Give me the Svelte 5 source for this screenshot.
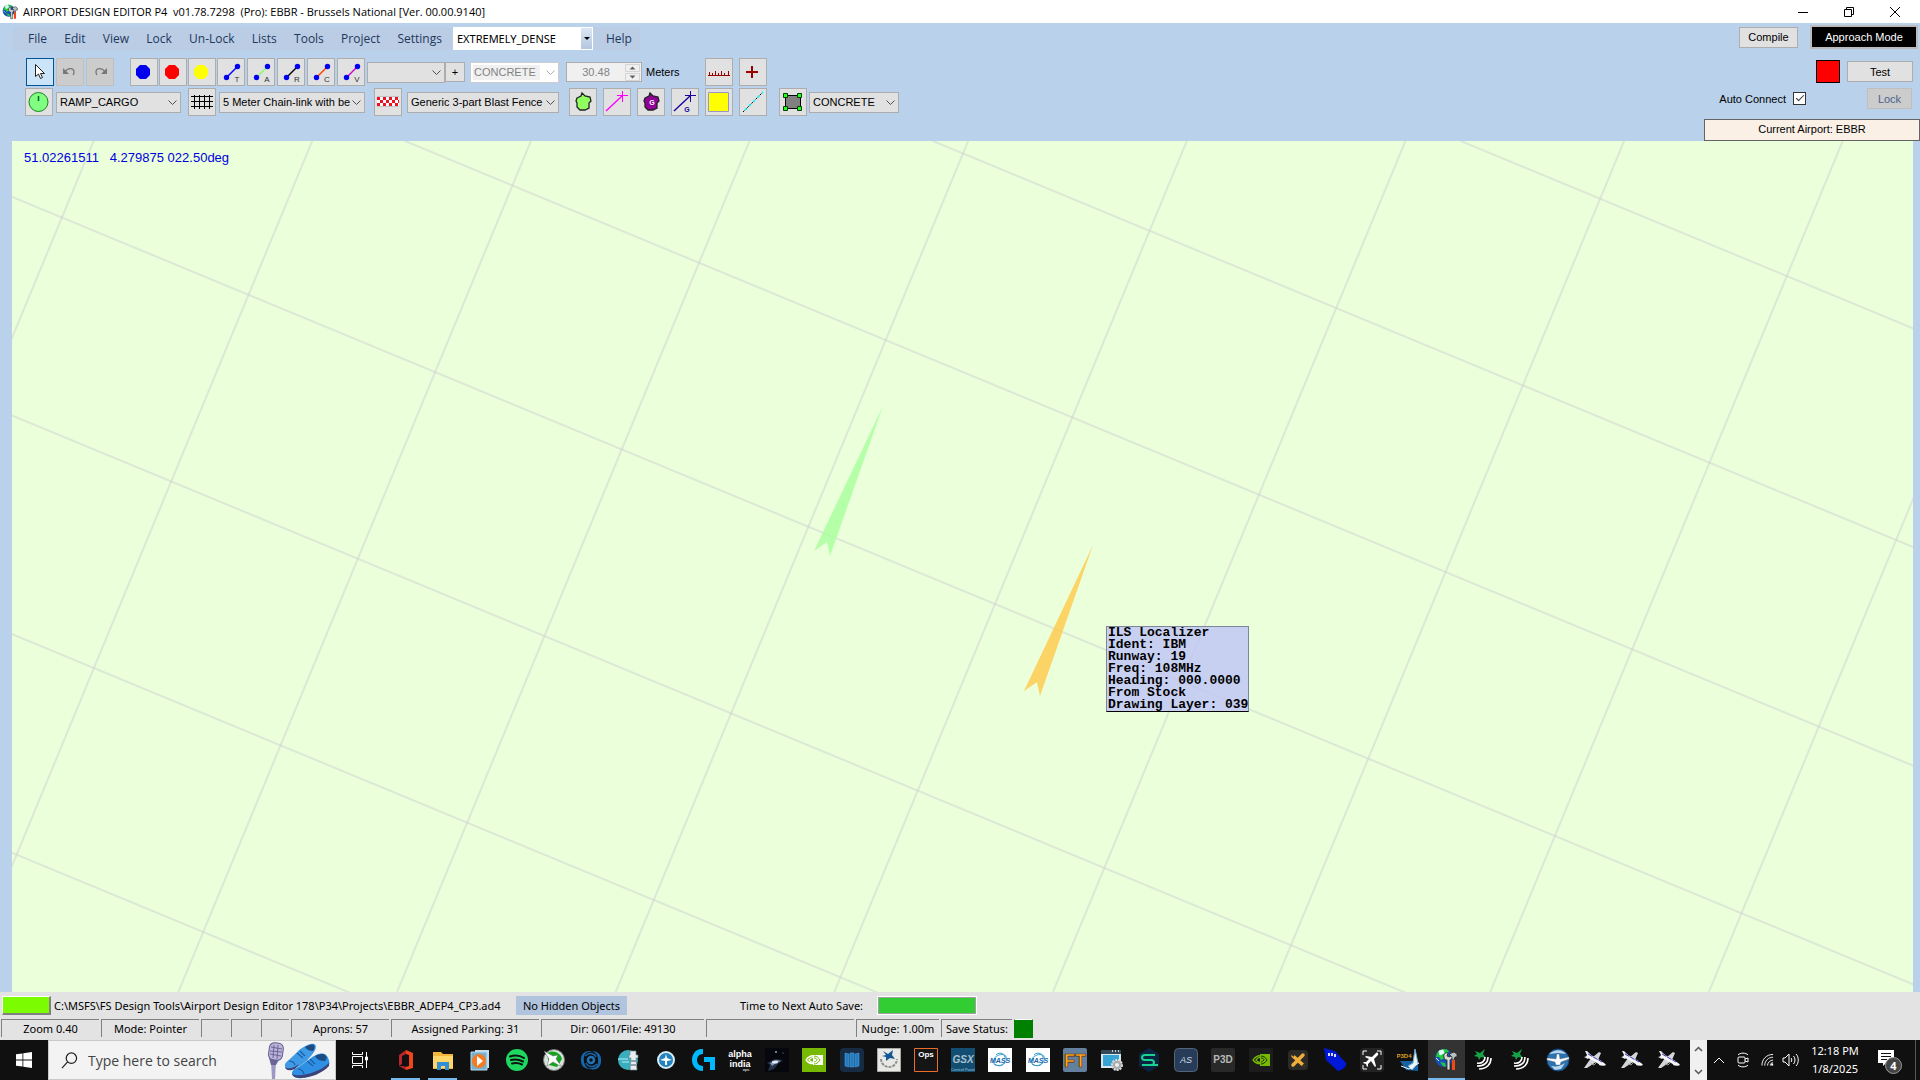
<script>
	const menus = ['File', 'Edit', 'View', 'Lock', 'Un-Lock', 'Lists', 'Tools', 'Project', 'Settings'];

	const vertices = [
		{ name: 'Blue vertex', color: '#0000f0' },
		{ name: 'Red vertex', color: '#ff0000' },
		{ name: 'Yellow vertex', color: '#ffff00' }
	];

	const links = [
		{ letter: 'T', color: '#0000ff' },
		{ letter: 'A', color: '#80ff60' },
		{ letter: 'R', color: '#000000' },
		{ letter: 'C', color: '#ff4000' },
		{ letter: 'V', color: '#d000d0' }
	];

	const tooltip = [
		'ILS Localizer',
		'Ident: IBM',
		'Runway: 19',
		'Freq: 108MHz',
		'Heading: 000.0000',
		'From Stock',
		'Drawing Layer: 039'
	];

	const apps = [
		'office', 'explorer', 'player', 'spotify', 'fsx', 'swirl', 'tower', 'compass', 'logitech',
		'alpha', 'space', 'nvidia', 'books', 'plane', 'ops', 'gsx', 'mass', 'mass', 'ft', 'setup',
		'sim', 'as', 'p3d', 'nvidia2', 'xtool', 'phone', 'flight', 'p3d4', 'ade', 'radar', 'radar',
		'globe', 'jet', 'jet', 'jet'
	];
	const running = ['office', 'explorer', 'ade'];

	let density = $state('EXTREMELY_DENSE');
	let autoConnect = $state(true);
	let width = $state('30.48');
</script>

{#snippet chevron()}
	<svg class="chevron" viewBox="0 0 9 6" aria-hidden="true"><path d="M.5.5l4 4 4-4" /></svg>
{/snippet}

{#snippet combo(label, value, cls, disabled = false)}
	<span class="combo {cls}" class:disabled>
		<select aria-label={label} {disabled}><option>{value}</option></select>
		{@render chevron()}
	</span>
{/snippet}

{#snippet adeIcon()}
	<circle cx="10" cy="10" r="9" fill="#1650b8" />
	<path d="M3 5c3-5 9-5 12-2l-3 3-1 4-4 2-2-3-3 0zM6 14l5 1 1 4-3-1z" fill="#24c83c" />
	<path d="M5 3l4-1 1 3-4 2zM2 10l3 3" stroke="#d8f4ff" fill="#e8ffff" />
	<path d="M10 9c-1-3 2-5 4-4l-1 3 3 1 2-3c2 3 0 5-2 6v10h-3V12c-2 0-3-1-3-3z" fill="#d8d8d8" stroke="#222" stroke-width=".8" />
	<path d="M15 6l5-2 3 2v3h-2l-1 3h-2V9z" fill="#b8c0c0" stroke="#222" stroke-width=".8" />
	<path d="M18 12h3v10h-3z" fill="#f04818" />
{/snippet}

{#snippet polyPath(fill)}
	<path d="M8 10l4-2 1-3 3 3 5 1 1 4-2 2v5l-4 2h-5l-3-3v-4l-1-2z" {fill} stroke="#222" stroke-width="1.3" />
{/snippet}

{#snippet appIcon(name)}
	<svg viewBox="0 0 24 24" aria-hidden="true">
		{#if name === 'office'}
			<path d="M12 2L5 7v11l3-2V8l4-2zM5 18l7 4 2-3-6-1z" fill="#b8262c" />
			<path d="M12 2l7 3v15l-7 2v-3l3-1V7l-3-1z" fill="#f0441c" />
		{:else if name === 'explorer'}
			<path d="M2 4h8l2 2h10v15H2z" fill="#f0b73a" />
			<path d="M2 8h20v12H2z" fill="#ffd768" />
			<path d="M6 22v-8h12v8h-4v-4h-4v4z" fill="#318fd8" />
		{:else if name === 'player'}
			<path d="M7 2h14v18H7z" fill="#c7dce9" />
			<path d="M3 4h16v18H3z" fill="#75afd1" stroke="#b8dceb" />
			<circle cx="11" cy="13" r="7" fill="#f47b20" />
			<path d="M9 8l6 5-6 5z" fill="#fff" />
		{:else if name === 'spotify'}
			<circle cx="12" cy="12" r="11" fill="#1ed760" />
			<path d="M5 8.500c5-1.500 10-1 14 1.500M6 12c4-1 8-.6 12 1.500M7 15.500c4-1 7-.5 10 1" fill="none" stroke="#111" stroke-width="2" stroke-linecap="round" />
		{:else if name === 'fsx'}
			<circle cx="12" cy="12" r="10.500" fill="#d8e3da" stroke="#777" />
			<path d="M5 5c6-4 14 0 15 6l-5 8-8-2z" fill="#12a51e" />
			<path d="M2 3l9 5 5-1-2 4 6 8-9-5-6 4 2-7z" fill="#fff" stroke="#666" stroke-width=".5" />
		{:else if name === 'swirl'}
			<circle cx="12" cy="12" r="3" fill="none" stroke="#2272b8" stroke-width="2.500" />
			<path d="M2 13C1 5 8 1 14 4c-6-1-10 2-9 9 0 4 3 7 6 8-5 0-9-3-9-8zM22 11c1 9-6 13-13 9 7 1 11-2 10-9 0-4-3-7-6-8 5 0 9 3 9 8z" fill="#1766ac" />
			<path d="M6 8c4-4 9-3 11 1M18 16c-4 4-9 3-11-1" fill="none" stroke="#1766ac" stroke-width="1.500" />
		{:else if name === 'tower'}
			<circle cx="11" cy="12" r="10" fill="#39aebe" />
			<path d="M1 11h10M5 14h7" stroke="#b9edf4" />
			<path d="M13 3h6v4h2v3h-2l1 12h-7l1-12h-2V7h1z" fill="#e7eef0" stroke="#74848a" stroke-width=".7" />
			<path d="M14 13h5M14 17h6" stroke="#91a3aa" stroke-width="2" />
		{:else if name === 'compass'}
			<circle cx="12" cy="12" r="8" fill="#2182bd" stroke="#d8edf4" stroke-width="2" />
			<path d="M12 6l1 4 5 2-5 1v4h-2v-4l-5-1 5-2z" fill="#fff" />
		{:else if name === 'logitech'}
			<path d="M12 1C5 0 1 6 1 12s4 11 11 11v-5c-4 0-6-3-6-6s2-6 6-6zM13 9h11v13h-5v-8h-6z" fill="#00b8fc" />
		{:else if name === 'alpha'}
			<text x="12" y="9" class="alpha">alpha</text>
			<text x="12" y="19" class="alpha">india</text>
			<text x="18" y="23" class="tiny">ops</text>
		{:else if name === 'space'}
			<path d="M0 0h24v24H0z" fill="#05070c" />
			<path d="M2 15l8-4 8 1-5 4-4 5-6 2 2-6z" fill="#26324a" />
			<path d="M5 15l7-3 4 1-5 2-4 3z" fill="#8794b0" />
			<ellipse cx="10" cy="14" rx="3" ry="1.500" fill="#dfe9fa" />
			<circle cx="11" cy="4" r="1" fill="#90a8bf" />
			<circle cx="18" cy="5" r=".7" fill="#606880" />
		{:else if name === 'nvidia'}
			<path d="M0 0h24v24H0z" fill="#76b900" />
			<path d="M11 7h10v10H11z" fill="#fff" />
			<path d="M4 12c4-6 10-5 14-1-4 6-10 6-14 1zm3 0c3-4 6-3 8 0-2 3-6 3-8 0z" fill="none" stroke="#fff" stroke-width="1.300" />
			<path d="M12 8c3 0 5 2 6 4-2 3-4 4-6 4M12 10c2 0 3 1 3 2-1 1-2 2-3 2" fill="none" stroke="#76b900" />
		{:else if name === 'books'}
			<rect width="24" height="24" rx="4" fill="#172b43" />
			<path d="M5 5l4 1v13l-4-1zM10 5h4v14h-4zM15 6l4-1v13l-4 1z" fill="#247bc0" stroke="#489ed8" stroke-width=".6" />
		{:else if name === 'plane'}
			<path d="M.5.500h23v23H.500z" fill="#e8e8e4" stroke="#a8a8a8" />
			<path d="M4 11a8 8 0 1 0 16 0" fill="none" stroke="#8f8f8f" stroke-width="2" stroke-dasharray="3 1" />
			<path d="M6 3l5 3 5-4-1 5 3 4-5-1-4 3V9L5 8l4-1z" fill="#125694" />
		{:else if name === 'ops'}
			<path d="M.5.500h23v23H.500z" fill="#151515" stroke="#ee6c2b" />
			<text x="12" y="9" class="ops">Ops</text>
		{:else if name === 'gsx'}
			<path d="M0 0h24v24H0z" fill="#124d72" />
			<text x="12" y="15" class="gsx">GSX</text>
			<text x="12" y="23" class="tiny panel">Control Panel</text>
		{:else if name === 'mass'}
			<path d="M0 0h24v24H0z" fill="#fff" />
			<ellipse cx="12" cy="12" rx="7" ry="5" fill="none" stroke="#47afe2" transform="rotate(-30 12 12)" />
			<path d="M8 7c4-4 10-1 9 4M6 16c5 3 9 2 11-2" fill="none" stroke="#2f92ca" />
			<text x="12" y="15" class="mass">MASS</text>
		{:else if name === 'ft'}
			<rect width="24" height="24" rx="2" fill="#63809e" />
			<text x="12" y="19" class="ft">FT</text>
		{:else if name === 'setup'}
			<path d="M1 2h20v18H1z" fill="#d9e8f0" />
			<path d="M1 2h20v4H1z" fill="#354858" />
			<path d="M3 7h16v11H3z" fill="#36a5d4" />
			<path d="M12 3h1M15 3h1M18 3h1" stroke="#fff" stroke-width="1.500" />
			<circle cx="17" cy="17" r="5" fill="#aaa" stroke="#ddd" stroke-width="2" stroke-dasharray="2 1" />
			<circle cx="17" cy="17" r="2" fill="#eee" />
		{:else if name === 'sim'}
			<path d="M12 0l10 6v12l-10 6-10-6V6z" fill="#0b2540" />
			<path d="M18 7H8c-4 0-4 5 0 5h6c4 0 4 5 0 5H5M15 17h6" fill="none" stroke="#1ad391" stroke-width="2" />
		{:else if name === 'as'}
			<rect x=".5" y=".5" width="23" height="23" rx="4" fill="#263c58" stroke="#536579" />
			<text x="12" y="15" class="as">AS</text>
		{:else if name === 'p3d'}
			<rect width="24" height="24" rx="2" fill="#292929" />
			<text x="12" y="15" class="p3d">P3D</text>
		{:else if name === 'nvidia2'}
			<path d="M0 0h24v24H0z" fill="#1c1c1c" />
			<path d="M11 6h10v12H11z" fill="#76b900" />
			<path d="M4 12c4-6 10-5 14-1-4 6-10 6-14 1zm3 0c3-4 6-3 8 0-2 3-6 3-8 0z" fill="none" stroke="#76b900" stroke-width="1.300" />
			<path d="M12 8c3 0 5 2 6 4-2 3-4 4-6 4M12 10c2 0 3 1 3 2-1 1-2 2-3 2" fill="none" stroke="#20300a" />
		{:else if name === 'xtool'}
			<rect x="2" y="2" width="20" height="20" rx="4" fill="#2c2a27" />
			<path d="M7 8l10 9M17 7L7 17" stroke="#efad3a" stroke-width="3.500" stroke-linecap="round" />
			<path d="M5 5l3 3M19 16l-3 3" stroke="#2c2a27" stroke-width="2" />
		{:else if name === 'phone'}
			<path d="M1 0l11 3 11 12c1 4-4 7-8 8L3 12z" fill="#0018d8" />
			<path d="M5 5h2v3H5zM8 5h2v3H8zM11 6h2v3h-2z" fill="#d4ddff" />
		{:else if name === 'flight'}
			<rect width="24" height="24" rx="4" fill="#242424" />
			<path d="M3 7V3h4M17 3h4v4M21 17v4h-4M7 21H3v-4" fill="none" stroke="#fff" />
			<path d="M6 8l6 1 4-4c1-1 3 0 2 2l-4 4 2 7-1 1-4-6-3 3v2l-1 1-1-3-3-1 1-1h2l3-3-4-2z" fill="#fff" />
		{:else if name === 'p3d4'}
			<path d="M3 13h18v10l-12-1z" fill="#1762a0" />
			<path d="M18 1l3 14-6 7-4-4 5-3z" fill="#e8f3f8" stroke="#6fa6c8" />
			<path d="M4 18l8 3 10-6" fill="none" stroke="#fff" />
			<text x="7" y="10" class="p3d4">P3D4</text>
		{:else if name === 'ade'}
			{@render adeIcon()}
		{:else if name === 'radar'}
			<path d="M3 3l5 2 5-4-2 5 3 4-5-1-2 3-1-3-4-1 3-2z" fill="#16a348" />
			<path d="M5 15c5 1 8-2 8-6M5 18c8 0 11-4 11-9M7 21c8 0 12-5 12-11" fill="none" stroke="#fff" stroke-width="1.600" />
		{:else if name === 'globe'}
			<circle cx="12" cy="12" r="11" fill="#2c72ae" stroke="#164375" />
			<path d="M3 6c6-5 13-5 17 0l-8-1zM5 18c6 1 9 0 14-3l-4 6-6 1z" fill="#b9d7ed" />
			<path d="M1 10l9 1 1-5h2l1 5 9-2v2l-8 3-1 3h-4l-1-3-8-2z" fill="#fff" stroke="#5a6e80" stroke-width=".4" />
		{:else if name === 'jet'}
			<path d="M10 9l6-5 2 1-3 7zM8 10L1 20h3l9-6z" fill="#d4d5d9" />
			<path d="M2 3h2l4 4-3 2zM1 9l4-1 2 1-2 2z" fill="#e6e6ea" />
			<path d="M4 7l14 8" stroke="#f6f6f8" stroke-width="4" />
			<path d="M17 13c3 1 5 2 6 4-1 1-5 1-7 0z" fill="#f6f6f8" />
			<path d="M5 6l14 8" stroke="#3036b8" stroke-dasharray="5 1" />
			<path d="M8 16l3 1 2-2" fill="none" stroke="#999" />
		{/if}
	</svg>
{/snippet}

<div class="desktop">
	<div class="titlebar">
		<svg class="app-icon" viewBox="0 0 24 24" aria-hidden="true">{@render adeIcon()}</svg>
		<h1>AIRPORT DESIGN EDITOR P4&nbsp; v01.78.7298&nbsp; (Pro): EBBR - Brussels National [Ver. 00.00.9140]</h1>
		<div class="window-buttons">
			<button aria-label="Minimize"><svg viewBox="0 0 12 12"><path d="M1 6.500h10" /></svg></button>
			<button aria-label="Restore"><svg viewBox="0 0 12 12"><path d="M1.500 3.500h7v7h-7zM3.500 3.500v-2h7v7h-2" /></svg></button>
			<button aria-label="Close"><svg viewBox="0 0 12 12"><path d="M1 1l10 10M11 1L1 11" /></svg></button>
		</div>
	</div>

	<header>
		<div class="tools">
			<nav class="menubar">
				<div class="menus">
					{#each menus as menu}
						<button>{menu}</button>
					{/each}
				</div>
				<span class="combo density">
					<select aria-label="Scenery density" bind:value={density}>
						<option>EXTREMELY_DENSE</option>
						<option>DENSE</option>
						<option>NORMAL</option>
					</select>
					<span class="drop"></span>
				</span>
				<button>Help</button>
			</nav>

			<div class="row first">
				<div class="group wide">
					<button class="tool active" aria-label="Pointer">
						<svg viewBox="1 1 26 26"><path d="M9.500 6.500v12l3-2.500 2 4.500 2-1-2-4h4z" fill="#fff" stroke="#222" /></svg>
					</button>
					<button class="tool off" aria-label="Undo" disabled>
						<svg viewBox="1 1 26 26"><path d="M7 10v6h6z" fill="#777" /><path d="M9 14c3-5 9-4 9 0 0 1 0 2-1 3" fill="none" stroke="#777" stroke-width="1.300" /></svg>
					</button>
					<button class="tool off" aria-label="Redo" disabled>
						<svg viewBox="1 1 26 26"><path d="M21 10v6h-6z" fill="#777" /><path d="M19 14c-3-5-9-4-9 0 0 1 0 2 1 3" fill="none" stroke="#777" stroke-width="1.300" /></svg>
					</button>
				</div>
				<div class="group vertices">
					{#each vertices as v}
						<button class="tool" aria-label={v.name}>
							<svg viewBox="1 1 26 26"><path d="M10 7h6l4 4v6l-4 4h-6l-4-4v-6z" fill={v.color} /></svg>
						</button>
					{/each}
				</div>
				<div class="group links">
					{#each links as l}
						<button class="tool" aria-label="Link {l.letter}">
							<svg viewBox="1 1 26 26">
								<path d="M9.500 19.500l11-11" stroke={l.color} stroke-width="1.400" />
								<circle cx="9.500" cy="19.500" r="2.700" fill="#0000f0" />
								<circle cx="20.500" cy="8.500" r="2.700" fill="#0000f0" />
								<text x="20" y="24" class="link-letter">{l.letter}</text>
							</svg>
						</button>
					{/each}
				</div>
				{@render combo('Link name', '', 'w-name')}
				<button class="add" aria-label="Add name">+</button>
				{@render combo('Link surface', 'CONCRETE', 'w-surface', true)}
				<span class="spinner">
					<input aria-label="Width in meters" bind:value={width} disabled />
					<svg viewBox="0 0 15 17" aria-hidden="true">
						<path d="M.5.500h14v7H.500zM.5 9.500h14v7H.500z" fill="#f0f0f0" stroke="#d4d4d4" />
						<path d="M4.500 5.500l3-3 3 3zM4.500 11.500l3 3 3-3z" fill="#606060" />
					</svg>
				</span>
				<span class="unit">Meters</span>
				<div class="group measure">
					<button class="tool" aria-label="Measure">
						<svg viewBox="1 1 26 26"><path d="M3 17.500h22M4.500 17v-3M7.500 17v-2M10.500 17v-4M13.500 17v-2M16.500 17v-4M19.500 17v-2M23.500 17v-4" stroke="#900" fill="none" /></svg>
					</button>
					<button class="tool" aria-label="Add point">
						<svg viewBox="1 1 26 26"><path d="M7 14h12M13 8v12" stroke="#900" stroke-width="2" /></svg>
					</button>
				</div>
			</div>

			<div class="row second">
				<button class="tool" aria-label="Parking">
					<svg viewBox="1 1 26 26">
						<circle cx="13.500" cy="14" r="9.500" fill="#80ff80" stroke="#208020" />
						<path d="M13.500 8v5" stroke="#063" stroke-width="1.500" />
					</svg>
				</button>
				{@render combo('Parking type', 'RAMP_CARGO', 'w-parking')}
				<button class="tool fence" aria-label="Fence">
					<svg viewBox="1 1 26 26"><path d="M3 8.500h22M3 13.500h22M3 18.500h22M6.500 7v14M11.500 7v14M16.500 7v14M21.500 7v14" stroke="#000" fill="none" /></svg>
				</button>
				{@render combo('Fence type', '5 Meter Chain-link with be', 'w-fence')}
				<button class="tool blast" aria-label="Blast fence">
					<svg viewBox="1 1 26 26">
						<path d="M3 9h22v9H3z" fill="#fff" />
						<path d="M3 8.500h22M3 18.500h22" stroke="#c4c4c4" />
						<path d="M3 10.500h22M3 16.500h22" stroke="#f01020" stroke-width="3" stroke-dasharray="3" />
						<path d="M6 13.500h19" stroke="#f01020" stroke-width="3" stroke-dasharray="3" />
					</svg>
				</button>
				{@render combo('Blast fence type', 'Generic 3-part Blast Fence', 'w-blast')}
				<div class="group shapes">
					<button class="tool" aria-label="Polygon"><svg viewBox="1 1 26 26">{@render polyPath('#90ff60')}</svg></button>
					<button class="tool" aria-label="Line">
						<svg viewBox="1 1 26 26"><path d="M3 23L19 8" stroke="#f0f" stroke-width="1.400" /><path d="M14 7.500h11M19.500 3v11" stroke="#f0f" /></svg>
					</button>
					<button class="tool" aria-label="Ground polygon">
						<svg viewBox="1 1 26 26">{@render polyPath('#900098')}<text x="15" y="17" class="g light">G</text></svg>
					</button>
					<button class="tool" aria-label="Ground line">
						<svg viewBox="1 1 26 26"><path d="M3 23L19 8" stroke="#20009c" stroke-width="1.400" /><path d="M14 7.500h11M19.500 3v11" stroke="#20009c" /><text x="16" y="24" class="g">G</text></svg>
					</button>
					<button class="tool" aria-label="Rectangle">
						<svg viewBox="1 1 26 26"><path d="M3.500 4.500h20v19h-20z" fill="#ff0" stroke="#9898c8" /></svg>
					</button>
					<button class="tool" aria-label="Dashed line">
						<svg viewBox="1 1 26 26">
							<path d="M4 24L24 4" stroke="#000" stroke-dasharray="2 1" />
							<path d="M6 22L24 4" stroke="#0ff" stroke-width="2" stroke-dasharray="2 4" />
						</svg>
					</button>
				</div>
				<button class="tool area" aria-label="Apron">
					<svg viewBox="1 1 26 26">
						<path d="M6.500 7.500h15v13h-15z" fill="#808080" stroke="#000" />
						<path d="M4.500 5.500h4v4h-4zM18.500 5.500h4v4h-4zM4.500 18.500h4v4h-4zM18.500 18.500h4v4h-4z" fill="#20ff20" stroke="#004000" />
					</svg>
				</button>
				{@render combo('Apron surface', 'CONCRETE', 'w-apron')}
			</div>
		</div>

		<div class="side">
			<div class="side-row modes">
				<button class="push compile">Compile</button>
				<button class="push approach">Approach Mode</button>
			</div>
			<div class="side-row test">
				<span class="signal"></span>
				<button class="push">Test</button>
			</div>
			<div class="side-row connect">
				<label>Auto Connect <input type="checkbox" bind:checked={autoConnect} /></label>
				<button class="push lock" disabled>Lock</button>
			</div>
			<div class="airport">Current Airport: EBBR</div>
		</div>
	</header>

	<main>
		<svg class="map" role="img" aria-label="Airport map">
			<defs>
				<pattern id="grid" width="202" height="202" patternUnits="userSpaceOnUse" patternTransform="translate(983 463) rotate(22.5) translate(-101 -101)">
					<path d="M101 0v202M0 101h202" stroke="#d0d0d0" stroke-width="1" fill="none" />
				</pattern>
			</defs>
			<rect width="100%" height="100%" fill="url(#grid)" />
			<path d="M871 265l-69 145 13-9 3 14z" fill="#a8ff9c" fill-opacity=".8" />
			<path d="M1081 404l-69 146 13-9 3 14z" fill="#ffcb50" fill-opacity=".85" />
		</svg>
		<span class="coords">51.02261511   4.279875 022.50deg</span>
		<div class="tooltip">
			{#each tooltip as line}
				<div>{line}</div>
			{/each}
		</div>
	</main>

	<footer>
		<div class="file-row">
			<span class="led"></span>
			<span class="path">C:\MSFS\FS Design Tools\Airport Design Editor 178\P34\Projects\EBBR_ADEP4_CP3.ad4</span>
			<span class="hidden-objects">No Hidden Objects</span>
			<span class="autosave">Time to Next Auto Save:</span>
			<span class="autosave-bar"></span>
		</div>
		<div class="status-row">
			<span class="cell w98">Zoom 0.40</span>
			<span class="cell w98">Mode: Pointer</span>
			<span class="cell w28"></span>
			<span class="cell w28"></span>
			<span class="cell w28"></span>
			<span class="cell w98">Aprons: 57</span>
			<span class="cell w148">Assigned Parking: 31</span>
			<span class="cell w163">Dir: 0601/File: 49130</span>
			<span class="cell w148"></span>
			<span class="cell w83">Nudge: 1.00m</span>
			<span class="cell save">Save Status:</span>
			<span class="save-led"></span>
		</div>
	</footer>

	<div class="taskbar">
		<button class="start" aria-label="Start">
			<svg viewBox="0 0 16 16"><path d="M0 2.300l6.500-.9v6.200H0zM7.300 1.300L16 0v7.600H7.300zM0 8.400h6.500v6.200L0 13.700zM7.300 8.400H16V16l-8.700-1.300z" fill="#fff" /></svg>
		</button>
		<label class="search">
			<svg class="lens" viewBox="0 0 18 18" aria-hidden="true"><circle cx="11" cy="6.500" r="5.500" /><path d="M7 10.500L1 17" /></svg>
			<input type="text" aria-label="Search" placeholder="Type here to search" />
			<svg class="art" viewBox="0 0 64 38" aria-hidden="true">
				<path d="M4 20l1 18h3l1-18z" fill="#9d97c4" />
				<path d="M2 17l2 7h5l4-7z" fill="#6b6494" />
				<rect x="2" y="2" width="14" height="17" rx="5" fill="#b9b4da" stroke="#655d90" transform="rotate(8 9 10)" />
				<path d="M4 6l11 2M3 10l12 1M3 13l11 2M7 4L6 17M11 4l-1 14" stroke="#655d90" stroke-width=".9" />
				<path d="M18 25c-1-3 3-5 7-9 4-3 6-7 10-9 5-3 9-5 12-4s2 5 0 8c-5 7-12 15-22 17-4 1-7 0-7-3z" fill="#3f9be6" />
				<path d="M38 6c3-2 7-3 9-2 1 1 1 4-1 6-3 0-6-1-8-4z" fill="#1b4c84" />
				<path d="M25 32c0-4 6-5 11-9 5-3 8-7 13-9 4-2 8-2 10 0 3 3 4 8 3 10-5 7-18 12-27 13-6 1-10-2-10-5z" fill="#2f8fe2" />
				<path d="M48 15c4-2 8-3 10-1 2 1 2 4 0 6-4 0-8-1-10-5z" fill="#1b4c84" />
				<path d="M25 33c8 4 28-2 37-11v3c-6 7-19 12-28 12-5 0-8-1-9-4zM18 26c4 3 10 0 14-3l-4 5c-5 2-9 2-10-2z" fill="#3d4378" />
				<path d="M30 12l6 5M33 10l5 5M40 20l6 5M43 18l5 5M22 20c3 0 5 1 6 4M31 28c3 0 5 2 6 5" fill="none" stroke="#1a5ca8" stroke-width="1.200" />
			</svg>
		</label>
		<button class="task-view" aria-label="Task View">
			<svg viewBox="0 0 18 18"><path d="M1.500 1v2.500h10V1M1.500 17v-2.500h10V17M1.500 5.500h10v7h-10zM15.500 1v16" /><path d="M14.500 6h2v3h-2z" fill="#fff" /></svg>
		</button>
		<div class="apps">
			{#each apps as app}
				<button class="app" class:running={running.includes(app)} class:current={app === 'ade'} aria-label={app}>
					{@render appIcon(app)}
				</button>
			{/each}
		</div>
		<div class="scroll">
			<svg viewBox="0 0 9 6"><path d="M1 5l3.500-3.500L8 5" /></svg>
			<svg viewBox="0 0 9 6"><path d="M1 1l3.500 3.500L8 1" /></svg>
		</div>
		<div class="tray">
			<svg class="up" viewBox="0 0 12 8"><path d="M1 7l5-5 5 5" /></svg>
			<svg class="cam" viewBox="0 0 12 16"><path d="M1 3c2-2.500 8-2.500 10 0M1 13c2 2.500 8 2.500 10 0" /><rect x="1" y="5" width="7" height="6" rx="1" /><path d="M8 7l3-1v4l-3-1" /></svg>
			<svg class="wifi" viewBox="0 0 14 14"><path d="M1 13C1 6 6 1 13 1M4 13c0-5 4-9 9-9M7 13c0-3 3-6 6-6M10 13c0-2 1-3 3-3" /><circle cx="12" cy="12" r="1.200" fill="#fff" stroke="none" /></svg>
			<svg class="volume" viewBox="0 0 17 14"><path d="M1 5h2l4-4v12L3 9H1zM9 5c1 1 1 3 0 4M11.500 3c2 2 2 6 0 8M14 1c3 3 3 9 0 12" /></svg>
			<div class="clock"><span>12:18 PM</span><span>1/8/2025</span></div>
			<button class="notes" aria-label="4 notifications">
				<svg viewBox="0 0 24 24">
					<path d="M0 0h16v13H8l-3 3v-3H0z" fill="#fff" />
					<path d="M3 3.500h10M3 6.500h10M3 9.500h6" stroke="#101010" />
					<circle cx="15.500" cy="15.500" r="8" fill="#444" stroke="#999" />
					<text x="15.500" y="19.500" class="badge">4</text>
				</svg>
			</button>
			<span class="peek"></span>
		</div>
	</div>
</div>

<style>
	:global(body) {
		background: #b9d1ea;
	}

	.desktop {
		--ui: 'Open Sans', 'Noto Sans', sans-serif;
		--ui-wide: 'Noto Sans', 'Open Sans', sans-serif;
		--forms: 'Liberation Sans', Arial, sans-serif;
		display: flex;
		flex-direction: column;
		height: 100vh;
		font-family: var(--ui);
		font-size: 11px;
		color: #000;
	}

	button,
	select,
	input {
		font: inherit;
		color: inherit;
		margin: 0;
		box-sizing: border-box;
	}

	button {
		display: flex;
		align-items: center;
		justify-content: center;
		padding: 0;
		border: 0;
		background: none;
		white-space: nowrap;
		flex-shrink: 0;
	}

	/* Title bar */
	.titlebar {
		display: flex;
		align-items: center;
		height: 23px;
		background: #fff;
		padding-left: 2px;
	}

	.app-icon {
		width: 16px;
		height: 16px;
	}

	h1 {
		margin: 0 0 0 5px;
		font-size: 11px;
		font-weight: 400;
		white-space: nowrap;
	}

	.window-buttons {
		display: flex;
		margin-left: auto;
		padding-right: 2px;
	}

	.window-buttons button {
		width: 46px;
		height: 20px;
	}

	.window-buttons svg {
		width: 12px;
		height: 12px;
		fill: none;
		stroke: #000;
	}

	/* Header */
	header {
		display: flex;
		justify-content: space-between;
		height: 118px;
		background: #b9d1ea;
	}

	.tools {
		padding: 4px 0 0 13px;
	}

	.menubar {
		display: flex;
		align-items: center;
		width: 627px;
		height: 23px;
		padding-left: 7px;
		box-sizing: border-box;
		background: #bbcce5;
		color: #1e395b;
		font-size: 12px;
	}

	.menus {
		display: flex;
		justify-content: space-between;
		width: 430px;
	}

	.menubar button {
		padding: 0 8px;
		height: 23px;
	}

	.row {
		display: flex;
		align-items: center;
		font-family: var(--forms);
	}

	.first {
		height: 30px;
		margin-top: 7px;
		padding-left: 13px;
	}

	.second {
		height: 28px;
		margin-top: 1px;
		padding-left: 12px;
	}

	.group {
		display: flex;
		gap: 1px;
	}

	.group.wide {
		gap: 2px;
	}

	.vertices {
		margin-left: 16px;
	}

	.links {
		gap: 2px;
		margin-left: 1px;
	}

	.measure {
		gap: 6px;
		margin-left: 18px;
	}

	.tool {
		width: 28px;
		height: 28px;
		border: 1px solid #adadad;
		background: #e1e1e1;
	}

	.tool svg {
		width: 26px;
		height: 26px;
	}

	.tool.active {
		border-color: #005499;
		background: #cce4f7;
	}

	.tool.off {
		border-color: #bfbfbf;
		background: #ccc;
	}

	.link-letter {
		font: 8px 'Liberation Sans', sans-serif;
		text-anchor: middle;
		fill: #333;
	}

	.g {
		font: bold 7px 'Liberation Sans', sans-serif;
		text-anchor: middle;
		fill: #20009c;
	}

	.g.light {
		fill: #fff;
	}

	.combo {
		position: relative;
		flex-shrink: 0;
		height: 21px;
	}

	.combo select {
		width: 100%;
		height: 21px;
		padding: 0 14px 0 3px;
		border: 1px solid #adadad;
		border-radius: 0;
		background: #e1e1e1;
		appearance: none;
		opacity: 1;
	}

	.combo.disabled select {
		border-color: #ccc;
		background: linear-gradient(#f0f0f0, #f0f0f0) 2px 2px / 67px 15px no-repeat #fff;
		color: #838383;
	}

	.chevron {
		position: absolute;
		right: 4px;
		top: 8px;
		width: 9px;
		height: 6px;
		fill: none;
		stroke: #505050;
		pointer-events: none;
	}

	.disabled .chevron {
		stroke: #b0b0b0;
	}

	.density {
		width: 140px;
		height: 23px;
		margin: 0 5px 0 3px;
	}

	.density select {
		height: 23px;
		border-color: #fff;
		background: #fff;
		color: #000;
		font-family: var(--ui-wide);
		font-size: 11px;
	}

	.drop {
		position: absolute;
		right: 1px;
		top: 1px;
		width: 11px;
		height: 21px;
		background: linear-gradient(#dce7f4, #b3c7de);
		pointer-events: none;
	}

	.drop::after {
		content: '';
		position: absolute;
		left: 3px;
		top: 9px;
		border: 3px solid transparent;
		border-top-color: #000;
		border-bottom: 0;
	}

	.w-name {
		width: 78px;
		margin-left: 2px;
	}

	.add {
		width: 20px;
		height: 20px;
		border: 1px solid #adadad;
		background: #e1e1e1;
	}

	.w-surface {
		width: 89px;
		margin-left: 5px;
	}

	.spinner {
		display: flex;
		align-items: center;
		width: 76px;
		height: 20px;
		margin-left: 7px;
		padding-right: 1px;
		box-sizing: border-box;
		border: 1px solid #adadad;
		background: #f0f0f0;
	}

	.spinner input {
		flex: 1;
		min-width: 0;
		height: 18px;
		padding: 0;
		border: 0;
		background: none;
		text-align: center;
		color: #838383;
	}

	.spinner svg {
		width: 15px;
		height: 17px;
	}

	.unit {
		width: 41px;
		margin-left: 4px;
	}

	.w-parking {
		width: 125px;
		margin-left: 3px;
	}

	.fence {
		margin-left: 7px;
	}

	.w-fence {
		width: 146px;
		margin-left: 3px;
	}

	.blast {
		margin-left: 9px;
	}

	.w-blast {
		width: 152px;
		margin-left: 5px;
	}

	.shapes {
		gap: 6px;
		margin-left: 10px;
	}

	.area {
		margin-left: 12px;
	}

	.w-apron {
		width: 90px;
		margin-left: 2px;
	}

	/* Right-hand controls */
	.side {
		display: flex;
		flex-direction: column;
		align-items: flex-end;
		padding-top: 2px;
		font-family: var(--forms);
	}

	.side-row {
		display: flex;
		align-items: center;
	}

	.push {
		width: 66px;
		height: 21px;
		border: 1px solid #adadad;
		background: #e1e1e1;
	}

	.modes {
		gap: 12px;
		height: 24px;
		padding-right: 2px;
	}

	.compile {
		width: 59px;
	}

	.approach {
		width: 108px;
		height: 24px;
		border: 2px solid #bbb;
		background: #000;
		color: #fff;
	}

	.test {
		gap: 7px;
		margin-top: 11px;
		padding-right: 7px;
	}

	.signal {
		width: 22px;
		height: 21px;
		border: 1px solid #000;
		background: #f00;
	}

	.connect {
		gap: 61px;
		margin-top: 5px;
		padding-right: 8px;
	}

	.connect label {
		display: flex;
		align-items: center;
		gap: 7px;
	}

	.connect input {
		display: grid;
		place-items: center;
		width: 13px;
		height: 13px;
		border: 1px solid #333;
		background: #fff;
		appearance: none;
	}

	.connect input:checked::after {
		content: '';
		width: 7px;
		height: 3px;
		margin-bottom: 3px;
		border: solid #333;
		border-width: 0 0 1px 1px;
		transform: rotate(-45deg);
	}

	.lock {
		width: 45px;
		border-color: #bfbfbf;
		background: #ccc;
		color: #49638a;
	}

	.airport {
		display: flex;
		align-items: center;
		justify-content: center;
		width: 216px;
		height: 22px;
		margin-top: auto;
		padding-bottom: 2px;
		box-sizing: border-box;
		border: 1px solid #646464;
		background: #faf0e6;
	}

	/* Map */
	main {
		position: relative;
		flex: 1;
		min-height: 0;
		margin: 0 7px 0 12px;
		overflow: hidden;
		background: #eaffda;
	}

	.map {
		display: block;
		width: 100%;
		height: 100%;
	}

	.coords {
		position: absolute;
		left: 12px;
		top: 9px;
		font: 13px/16px var(--forms);
		color: #0000e0;
		white-space: pre;
	}

	.tooltip {
		position: absolute;
		left: 1094px;
		top: 485px;
		width: 140px;
		padding-left: 1px;
		border: 1px solid #7e8798;
		border-bottom-color: #000;
		background: rgba(191, 196, 246, 0.8);
		font: bold 13px/12px 'Liberation Mono', monospace;
		white-space: nowrap;
	}

	/* Status */
	footer {
		background: #e3e3e3;
		font-family: var(--ui-wide);
		white-space: nowrap;
	}

	.file-row {
		display: flex;
		align-items: center;
		height: 27px;
		padding: 0 0 1px 2px;
		box-sizing: border-box;
	}

	.led {
		width: 46px;
		height: 16px;
		border: solid #fff;
		border-width: 1px 2px 2px 1px;
		border-right-color: #808080;
		border-bottom-color: #808080;
		background: #7cfc00;
	}

	.path {
		width: 459px;
		margin-left: 3px;
	}

	.hidden-objects {
		width: 111px;
		margin-left: 3px;
		line-height: 19px;
		text-align: center;
		background: #b0c4de;
	}

	.autosave {
		width: 127px;
		margin-left: 113px;
	}

	.autosave-bar {
		width: 96px;
		height: 15px;
		margin-left: 11px;
		border: 1px solid #a0a0a0;
		outline: 1px solid #fff;
		background: #32cd32;
	}

	.status-row {
		display: flex;
		gap: 2px;
		height: 21px;
		padding-left: 1px;
		box-sizing: border-box;
	}

	.cell {
		height: 18px;
		line-height: 18px;
		border: solid #808080;
		border-width: 1px 0 0 1px;
		box-sizing: border-box;
		text-align: center;
	}

	.w98 {
		width: 98px;
	}

	.w28 {
		width: 28px;
	}

	.w148 {
		width: 148px;
	}

	.w163 {
		width: 163px;
	}

	.w83 {
		width: 83px;
	}

	.save {
		width: 71px;
	}

	.save-led {
		width: 17px;
		height: 17px;
		border: 1px solid #008000;
		border-top-color: #fff;
		background: #008000;
	}

	/* Taskbar */
	.taskbar {
		display: flex;
		height: 40px;
		background: #101010;
		color: #fff;
	}

	.start {
		width: 48px;
	}

	.start svg {
		width: 16px;
		height: 16px;
	}

	.search {
		display: flex;
		align-items: center;
		width: 288px;
		box-sizing: border-box;
		padding: 0 4px 0 12px;
		border: 1px solid #c8c8c8;
		background: #f3f3f3;
	}

	.lens {
		width: 17px;
		height: 17px;
		fill: none;
		stroke: #222;
		stroke-width: 1.3;
	}

	.search input {
		flex: 1;
		min-width: 0;
		margin-left: 10px;
		padding: 0;
		border: 0;
		background: none;
		font-size: 14px;
	}

	.search input::placeholder {
		color: #444;
		opacity: 1;
	}

	.art {
		width: 64px;
		height: 38px;
	}

	.task-view {
		width: 48px;
	}

	.task-view svg {
		width: 18px;
		height: 18px;
		fill: none;
		stroke: #fff;
	}

	.apps {
		display: flex;
		flex: 1;
		min-width: 0;
		padding: 0 2px 0 3px;
		overflow: hidden;
	}

	.app {
		flex: 1 1 0;
		max-width: 48px;
		box-sizing: border-box;
		border-bottom: 2px solid transparent;
		padding-top: 2px;
	}

	.app svg {
		width: 24px;
		height: 24px;
		flex-shrink: 0;
	}

	.app.running {
		background: linear-gradient(#76b9ed, #76b9ed) center 38px / 29px 2px no-repeat border-box;
	}

	.app.current {
		border-bottom-color: #76b9ed;
		background: #333;
	}

	.app text {
		font-family: 'Liberation Sans', sans-serif;
		text-anchor: middle;
		fill: #fff;
	}

	.app .alpha {
		font-size: 9px;
		font-weight: 700;
	}

	.app .tiny {
		font-size: 4px;
	}

	.app .panel {
		fill: #9fc0d4;
	}

	.app .ops {
		font-size: 8px;
		font-weight: 700;
	}

	.app .gsx {
		font-size: 10px;
		font-style: italic;
		font-weight: 700;
		fill: #aac0cf;
	}

	.app .mass {
		font-size: 7px;
		font-style: italic;
		font-weight: 700;
		fill: #1763a8;
	}

	.app .ft {
		font-size: 18px;
		font-weight: 700;
		fill: #ffab22;
		stroke: #552d08;
		stroke-width: 0.7px;
	}

	.app .as {
		font-size: 9px;
		font-style: italic;
		fill: #cfdae6;
	}

	.app .p3d {
		font-size: 10px;
		font-weight: 700;
		fill: #b8b8b8;
	}

	.app .p3d4 {
		font-size: 6px;
		font-weight: 700;
		fill: #d8a028;
	}

	.scroll {
		display: flex;
		flex-direction: column;
		align-items: center;
		justify-content: space-between;
		width: 17px;
		padding: 6px 0 5px;
		box-sizing: border-box;
		background: #f0f0f0;
	}

	.scroll svg {
		width: 9px;
		height: 6px;
		fill: none;
		stroke: #555;
		stroke-width: 1.5;
	}

	.tray {
		display: flex;
		align-items: center;
		width: 213px;
		box-sizing: border-box;
		padding-left: 6px;
	}

	.tray > svg {
		flex-shrink: 0;
		fill: none;
		stroke: #fff;
	}

	.up {
		width: 12px;
		height: 8px;
	}

	.cam {
		width: 12px;
		height: 16px;
		margin-left: 12px;
	}

	.wifi {
		width: 13px;
		height: 14px;
		margin-left: 12px;
	}

	.volume {
		width: 17px;
		height: 14px;
		margin-left: 8px;
	}

	.clock {
		display: flex;
		flex-direction: column;
		align-items: center;
		width: 56px;
		margin-left: 8px;
		font-family: var(--ui-wide);
		line-height: 18px;
		white-space: nowrap;
	}

	.notes {
		margin-left: 15px;
		padding-top: 4px;
	}

	.notes svg {
		width: 24px;
		height: 24px;
	}

	.badge {
		font: bold 11px 'Open Sans', sans-serif;
		text-anchor: middle;
		fill: #fff;
	}

	.peek {
		width: 1px;
		height: 40px;
		margin-left: auto;
		margin-right: 4px;
		background: #555;
	}
</style>
